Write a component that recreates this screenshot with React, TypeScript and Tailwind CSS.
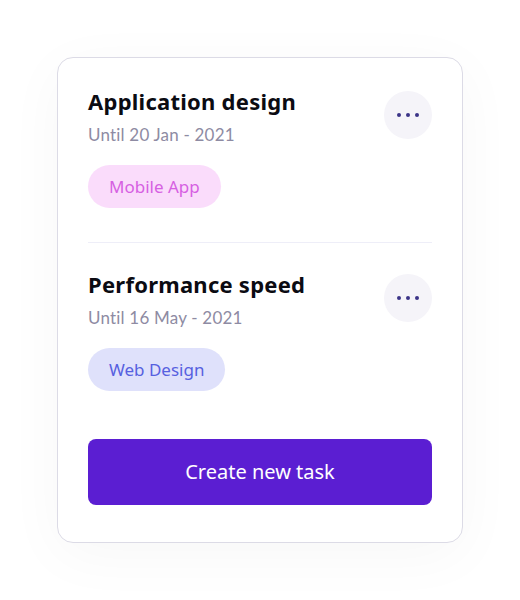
import React from 'react';

interface Task {
  title: string;
  until: string;
  tag: string;
  tagClass: string;
}

const tasks: Task[] = [
  { title: 'Application design', until: 'Until 20 Jan - 2021', tag: 'Mobile App', tagClass: 'bg-[#fadcfb] text-[#d660e2]' },
  { title: 'Performance speed', until: 'Until 16 May - 2021', tag: 'Web Design', tagClass: 'bg-[#dfe1fb] text-[#5660e0]' },
];

const MoreButton: React.FC = () => (
  <button className="mt-[5px] flex h-12 w-12 shrink-0 items-center justify-center gap-[5px] rounded-full bg-[#f5f4f9]">
    <span className="h-[4px] w-[4px] rounded-full bg-[#3b3488]" />
    <span className="h-[4px] w-[4px] rounded-full bg-[#3b3488]" />
    <span className="h-[4px] w-[4px] rounded-full bg-[#3b3488]" />
  </button>
);

const TaskItem: React.FC<{ task: Task }> = ({ task }) => (
  <div className="flex items-start justify-between">
    <div className="flex flex-col items-start">
      <h3 className="text-[22px] leading-[30px] font-bold tracking-[0.25px] text-[#0b0b12] font-['Noto_Sans',sans-serif]">{task.title}</h3>
      <p className="mt-[7px] text-[17px] leading-6 text-[#8e8ba3] font-['Lato',sans-serif] tracking-[0.2px]">{task.until}</p>
      <span
        className={`mt-[18px] flex h-[43px] items-center rounded-full px-[21px] text-[17px] font-['Noto_Sans',sans-serif] ${task.tagClass}`}
      >
        {task.tag}
      </span>
    </div>
    <MoreButton />
  </div>
);

export default function App() {
  return (
    <div className="min-h-[600px] w-[520px] bg-white pt-[57px] pl-[57px]">
      <div className="flex w-[406px] flex-col rounded-[16px] border border-[#dcdbe6] bg-white px-[30px] pt-[28px] pb-[37px] shadow-[0_12px_60px_rgba(40,30,0,0.035)]">
        <TaskItem task={tasks[0]} />
        <div className="mt-[34px] h-px bg-[#eeeef8]" />
        <div className="mt-[26px]">
          <TaskItem task={tasks[1]} />
        </div>
        <button className="mt-[48px] h-[66px] w-full rounded-[8px] bg-[#5b1ed2] text-[20px] font-normal text-white font-['Noto_Sans',sans-serif]">
          Create new task
        </button>
      </div>
    </div>
  );
}
